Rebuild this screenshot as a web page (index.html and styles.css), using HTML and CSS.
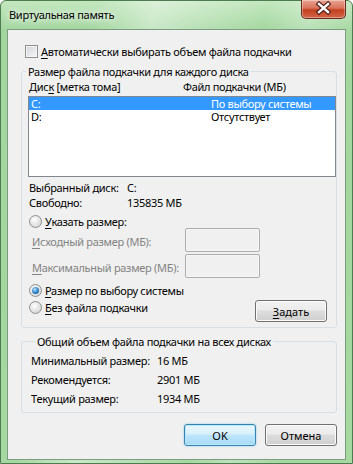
FILE: index.html
```html
<!DOCTYPE html>
<html lang="ru">
<head>
    <meta charset="UTF-8">
    <meta name="viewport" content="width=device-width, initial-scale=1.0">
    <title>Виртуальная память</title>
    <link rel="stylesheet" href="styles.css">
</head>
<body>
    <div class="window">
        <div class="titlebar">
            <div class="title">Виртуальная память</div>
            <div class="close">
                <svg width="45" height="19" viewBox="0 0 45 19">
                    <path d="M18 5 L27 13 M27 5 L18 13" stroke="#4a1a12" stroke-width="4.6" stroke-linecap="square"/>
                    <path d="M18 5 L27 13 M27 5 L18 13" stroke="#fff" stroke-width="2.4" stroke-linecap="square"/>
                </svg>
            </div>
        </div>
        <div class="client">
            <div class="auto-row">
                <span class="check"></span>
                <span><u>А</u>втоматически выбирать объем файла подкачки</span>
            </div>

            <fieldset class="group group-disks">
                <legend>Размер файла подкачки для каждого диска</legend>
                <div class="cols">
                    <span class="col-disk">Дис<u>к</u> [метка тома]</span>
                    <span>Файл подкачки (МБ)</span>
                </div>
                <div class="listbox">
                    <div class="list-row selected"><span class="col-drive">C:</span><span>По выбору системы</span></div>
                    <div class="list-row"><span class="col-drive">D:</span><span>Отсутствует</span></div>
                </div>
                <div class="info">
                    <div class="info-row"><span class="info-key">Выбранный диск:</span><span>C:</span></div>
                    <div class="info-row"><span class="info-key">Свободно:</span><span>135835 МБ</span></div>
                </div>
                <div class="radio-row first">
                    <span class="radio"></span>
                    <span><u>У</u>казать размер:</span>
                </div>
                <div class="size-row">
                    <span class="size-label"><u>И</u>сходный размер (МБ):</span>
                    <span class="field"></span>
                </div>
                <div class="size-row">
                    <span class="size-label"><u>М</u>аксимальный размер (МБ):</span>
                    <span class="field"></span>
                </div>
                <div class="radio-row system">
                    <span class="radio on"><span class="dot"></span></span>
                    <span><u>Р</u>азмер по выбору системы</span>
                </div>
                <div class="last-row">
                    <div class="radio-row">
                        <span class="radio"></span>
                        <span><u>Б</u>ез файла подкачки</span>
                    </div>
                    <button class="btn btn-set"><u>З</u>адать</button>
                </div>
            </fieldset>

            <fieldset class="group group-total">
                <legend>Общий объем файла подкачки на всех дисках</legend>
                <div class="total-row"><span class="total-key">Минимальный размер:</span><span>16 МБ</span></div>
                <div class="total-row"><span class="total-key">Рекомендуется:</span><span>2901 МБ</span></div>
                <div class="total-row"><span class="total-key">Текущий размер:</span><span>1934 МБ</span></div>
            </fieldset>

            <div class="actions">
                <button class="btn btn-default">OK</button>
                <button class="btn">Отмена</button>
            </div>
        </div>
    </div>
</body>
</html>
```
FILE: styles.css
```css
* {
    box-sizing: border-box;
}
body {
    margin: 0;
    background: #ffffff;
    font-family: "Noto Sans", sans-serif;
    font-size: 11px;
    letter-spacing: -0.3px;
    color: #000;
}
u {
    text-decoration: underline;
    text-underline-offset: 2px;
}
.window {
    width: 353px;
    height: 464px;
    display: flex;
    flex-direction: column;
    padding: 0 6px 3px 6px;
    border: 1px solid #4c7c50;
    border-radius: 6px 6px 0 0;
    background:
        linear-gradient(100deg, rgba(255,255,255,0) 22%, rgba(255,255,255,.4) 36%, rgba(255,255,255,.15) 52%, rgba(255,255,255,0) 62%, rgba(255,255,255,.25) 72%, rgba(255,255,255,0) 84%),
        linear-gradient(#c3e7bf, #a3d69f 30px, #a6d8a2);
}
.titlebar {
    height: 28px;
    display: flex;
    align-items: flex-start;
}
.title {
    padding-left: 2px;
    line-height: 28px;
    text-shadow: 0 0 6px #fff, 0 0 10px rgba(255,255,255,.8);
}
.close {
    margin-left: auto;
    margin-top: -1px;
    margin-right: 0;
    width: 45px;
    height: 19px;
    border: 1px solid #6a2a20;
    border-top: none;
    border-radius: 0 0 5px 5px;
    background: linear-gradient(#e9a493, #d9735c 45%, #c2401f 55%, #d4674a);
    box-shadow: inset 0 0 0 1px rgba(255,255,255,.35);
}
.close svg {
    display: block;
    margin: -1px 0 0 -1px;
}
.client {
    flex: 1;
    display: flex;
    flex-direction: column;
    background: #f0f0f0;
    border: 1px solid #7c9c7f;
}

/* checkbox */
.auto-row {
    margin: 15px 0 0 17px;
    display: flex;
    align-items: center;
    gap: 3px;
    height: 13px;
}
.check {
    width: 13px;
    height: 13px;
    border: 1px solid #8e8f8f;
    background: linear-gradient(135deg, #d2d4d8, #f7f7f7);
    box-shadow: inset 0 0 0 1px #f4f4f4;
}

/* group boxes */
.group {
    margin: 6px 8px 0 13px;
    padding: 0;
    border: 1px solid #d5dfe5;
    border-radius: 3px;
    min-width: 0;
}
.group legend {
    margin-left: 4px;
    padding: 0 2px;
    line-height: 15px;
}
.cols {
    display: flex;
    padding-left: 7px;
    line-height: 15px;
}
.col-disk {
    width: 154px;
}
.listbox {
    margin: 2px 0 0 6px;
    height: 81px;
    border: 1px solid #828790;
    background: #fff;
}
.list-row {
    display: flex;
    height: 13px;
    line-height: 13px;
    padding-left: 2px;
}
.list-row.selected {
    background: #3399ff;
    color: #fff;
}
.col-drive {
    width: 180px;
}
.info {
    margin-top: 3px;
    padding-left: 7px;
}
.info-row {
    display: flex;
    line-height: 15px;
}
.info-key {
    width: 98px;
}

/* radios */
.radio-row {
    display: flex;
    align-items: center;
    gap: 3px;
    height: 13px;
    padding-left: 7px;
}
.radio-row.first {
    margin-top: 5px;
}
.radio-row.system {
    margin-top: 6px;
}
.radio {
    width: 13px;
    height: 13px;
    border-radius: 50%;
    border: 1px solid #8e8f8f;
    background: radial-gradient(circle at 40% 35%, #ffffff, #e2e2e2 55%, #cfcfcf);
    display: flex;
    align-items: center;
    justify-content: center;
}
.radio .dot {
    width: 7px;
    height: 7px;
    border-radius: 50%;
    background: radial-gradient(circle at 40% 35%, #b6e4ff, #2a7fc4 55%, #0f4a8a);
}

/* size inputs */
.size-row {
    display: flex;
    align-items: center;
    padding-left: 10px;
    margin-bottom: 2px;
    color: #838383;
}
.size-label {
    width: 153px;
    padding-top: 3px;
}
.field {
    width: 75px;
    height: 24px;
    border: 1px solid #adadad;
    border-radius: 2px;
    box-shadow: inset 0 0 0 1px #f6f6f6;
}
.last-row {
    display: flex;
    align-items: flex-start;
    justify-content: space-between;
    margin-top: 4px;
    padding-bottom: 5px;
}
.btn-set {
    margin: -1px 9px 0 0;
}

/* buttons */
.btn {
    width: 72px;
    height: 22px;
    padding: 0;
    border: 1px solid #707070;
    border-radius: 3px;
    font: inherit;
    color: #000;
    background: linear-gradient(#f2f2f2, #ebebeb 45%, #dddddd 50%, #cfcfcf);
    box-shadow: inset 0 0 0 1px #fbfbfb;
}
.btn-default {
    border-color: #3c7fb1;
    background: linear-gradient(#eaf6fd, #d9f0fc 45%, #bee6fd 50%, #a7d9f5);
    box-shadow: inset 0 0 0 1px #b6ecff, 0 0 2px #6fc7f0;
}

/* totals */
.group-total {
    margin-top: 6px;
    padding: 2px 0 4px 9px;
}
.total-row {
    display: flex;
    line-height: 19px;
}
.total-key {
    width: 126px;
}
.actions {
    display: flex;
    justify-content: flex-end;
    gap: 9px;
    margin: 11px 8px 0 0;
}
```
